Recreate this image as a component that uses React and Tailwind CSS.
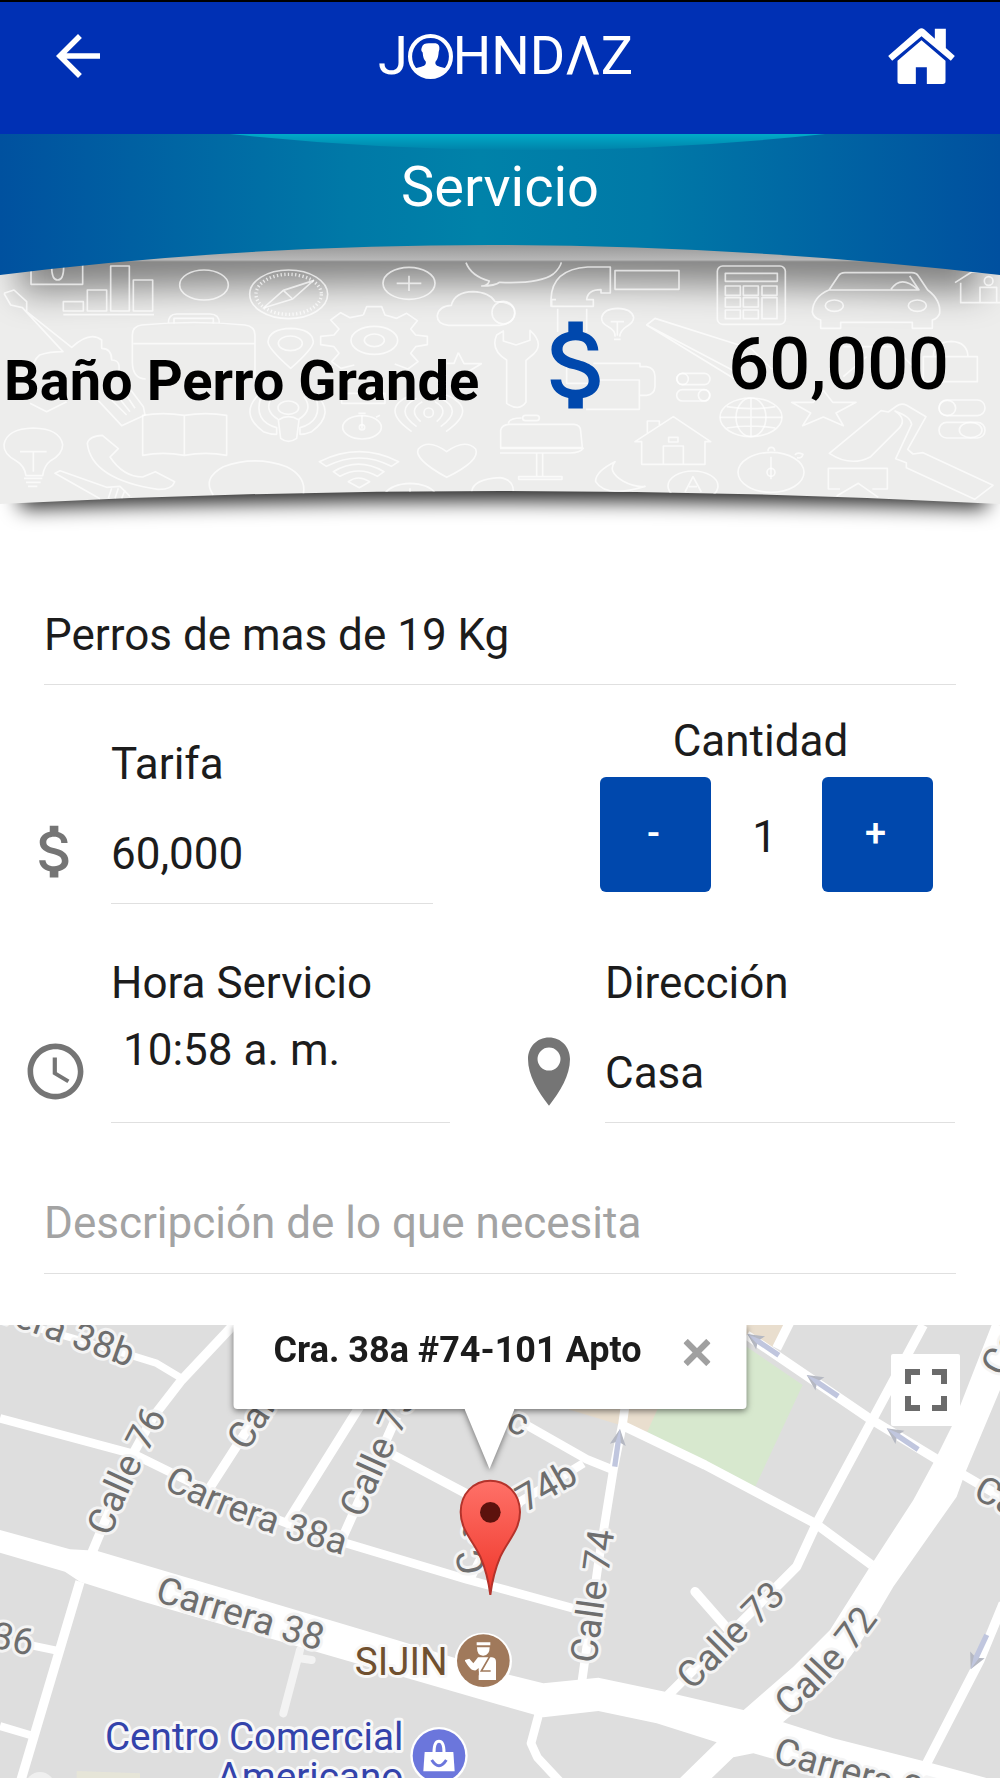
import { useId, useState } from "react";
import { MdAccessTime, MdArrowBack, MdAttachMoney, MdFullscreen } from "react-icons/md";

function PersonMark() {
  return (
    <svg viewBox="0 0 132 132" className="h-[45px] w-[45px]" aria-hidden="true">
      <circle cx="66" cy="66" r="60" fill="none" stroke="#fff" strokeWidth="12" />
      <path
        fill="#fff"
        d="M41 38c2-8 10-11 20-11h20c9 2 12 8 11 18l-2 8c-1 15-4 22-9 28-3 8 3 13 12 15l20 5c-12 16-28 25-47 25S31 117 19 101l20-5c10-2 15-7 13-15-5-6-8-13-9-27-5-4-5-9-2-16z"
      />
    </svg>
  );
}

function HomeIcon() {
  return (
    <svg viewBox="0 0 200 168" className="h-14 w-[67px]" fill="#fff" aria-hidden="true">
      <path d="M92 4Q100 -3 108 4L140 32V2H173V60L200 84 188 98 100 25 12 98 0 84Z" />
      <path d="M100 37L172 98V160Q172 168 164 168H116V118H83V168H36Q28 168 28 160V98Z" />
    </svg>
  );
}

function TopBar() {
  return (
    <header className="flex items-center justify-between border-t-2 border-black bg-[#0030b4] px-[45px] pb-6 text-white">
      <button type="button" aria-label="Volver" className="flex h-[108px] w-[66px] items-center justify-center">
        <MdArrowBack size={66} />
      </button>
      <h1 className="flex items-center pl-3 text-[54px] leading-[60px] font-normal" aria-label="Johndaz">
        <span>J</span>
        <PersonMark />
        <span>HNDΛZ</span>
      </h1>
      <a href="#inicio" aria-label="Inicio" className="flex h-[108px] items-center">
        <HomeIcon />
      </a>
    </header>
  );
}

function ToolDoodles() {
  return (
    <g fill="none" stroke="#fff" strokeOpacity="0.7" strokeWidth="5" strokeLinejoin="round">
      <path d="M93 105V163H248V105M155 110q0 40 18 40t18-40" />
      <path d="M190 215h60v28h-60zM262 180h58v63h-58zM332 108h56v135h-56zM400 150h58v93h-58zM190 254h272" />
      <path d="M12 190l30-10 38 35v30l135 107q55-50 90-22v25q30 0 30 35 30 0 20 40l75 100 5 25-70 32-70-75M12 190l20 35 35 8 122 132q-40 0-70 10-25 20-15 50M90 520l50 25 60-30M330 505l50 50M350 495l40 50M375 490l30 45" />
      <ellipse cx="612" cy="165" rx="73" ry="45" />
      <ellipse cx="866" cy="193" rx="117" ry="73" />
      <ellipse cx="866" cy="193" rx="98" ry="60" strokeDasharray="4 7" strokeWidth="10" />
      <path d="M940 152l-62 55-88 27 60-53zM850 181l28 26" />
      <path d="M425 285q-28 4-28 30v80q0 50 40 52M765 440V315q0-26-30-30-150-15-310 0M400 341h363M505 280q0-28 25-28h100q28 0 28 28M522 282v-17h118v17" />
      <path d="M872 415q-68-60-68-80 4-38 68-40 64 2 68 40 0 20-68 80z" />
      <ellipse cx="871" cy="340" rx="36" ry="22" />
      <path d="M1090 255l10-25h45l10 25 35 10 30-15 32 22-20 25 15 18 35 4v25l-35 6-15 20 22 25-30 22-40-15M1090 255l-40 8-28-15-30 22 25 27-15 18-40 4v25l40 6 15 20-22 25 28 20 40-10" />
      <ellipse cx="1123" cy="331" rx="70" ry="42" />
      <ellipse cx="1123" cy="331" rx="30" ry="19" />
      <ellipse cx="1227" cy="160" rx="78" ry="48" />
      <path d="M1190 160h74M1227 137v46" />
      <path d="M1398 98q15 40 70 55-5 15-23 15 40 0 55-12M1500 157q120 5 160-25 20-18 24-35" />
      <path d="M1500 286h-155q-35-4-33-30 5-28 42-30 10-40 65-41 50 2 66 30 60 0 60 35-3 30-45 36" />
      <path d="M1375 368l17 33h52l-40 24M1340 400h22l13-32M1025 490h130v30h-130z" />
      <path d="M780 490q-65 60 10 115 20 8 40 8v-20q-70-20-48-90M945 490q65 60-10 115-20 8-35 8v-20q70-20 48-90M818 500q-30 40 16 68M912 500q30 40-16 68" />
      <ellipse cx="865" cy="533" rx="31" ry="20" />
      <path d="M835 570q30-20 62 0l-7 55q-25 18-48 0z" />
      <ellipse cx="1086" cy="592" rx="58" ry="35" />
      <path d="M1086 556v40M1075 550h22M1128 562l12-6" />
      <circle cx="1086" cy="592" r="8" />
      <path d="M1235 605q-100-70 0-110M1338 605q100-70 0-110M1250 590q-70-50 0-85M1322 590q70-50 0-85M1262 575q-40-35 5-60M1310 575q40-35-5-60" />
      <circle cx="1286" cy="548" r="14" />
      <path d="M428 556q60-10 125 0 65-10 127 0v120q-62-12-127 0-65-12-125 0zM553 556v120" />
      <path d="M78 737q-4-30-30-45-38-20-36-48 8-48 88-50 80 2 88 50 0 28-36 48-20 15-24 45zM60 665h80M100 665v60M72 745h55M78 757h44M84 769h28" />
      <path d="M262 640q5-22 45-24l48 40-25 25q40 60 98 60l38-16 58 30q-8 24-50 23-200-30-212-138z" />
      <path d="M300 806L165 730l15-8 140 50 40-3 30 30M335 775l-10 30M355 775l-10 30M375 780l-10 25" />
      <path d="M640 795q-35-50 30-85 95-35 190 0 60 30 50 82" />
      <path d="M958 695q120-60 238 0l-22 14q-95-50-195 0zM1000 725q75-45 152 0l-20 14q-55-32-112 0zM1045 755q30-22 64 0l-31 18z" />
      <path d="M1340 742q-100-55-85-85 30-32 85 8 55-40 87-8 15 35-87 85z" />
      <path d="M1155 790q20-28 75-30 55 2 75 28M1230 775v15M1415 785q5-38 85-42 40 6 40 40" />
      <path d="M1653 230v-22q2-90 110-97h40v0h28v78h-28v-10q-40 0-43 30h20v20h-125v-20h13M1673 236v70M1760 236v70M1845 122h192v56h-192z" />
      <path d="M1845 320q2-18-20-30-22-10-20-28 6-26 48-27 42 1 48 27 0 16-22 28-18 12-20 30M1832 275h40M1852 275v42M1842 328h20" />
      <ellipse cx="1510" cy="248" rx="34" ry="34" />
      <path d="M1520 520V390q-50-30-30-75l20-12v30l38 12 42-14v-30q50 45 0 80l-12 10v125q-20 30-58 4z" />
      <path d="M2225 460L1940 285l25-20 290 92 60 60M1940 285l285 150" />
      <rect x="2152" y="108" width="204" height="175" rx="16" />
      <path d="M2176 130h156v24h-156zM2176 168h45v28h-45zM2230 168h45v28h-45zM2286 168h45v28h-45zM2176 203h45v28h-45zM2230 203h45v28h-45zM2176 240h45v26h-45zM2230 240h45v26h-45zM2286 203h45v63h-45z" />
      <path d="M2487 180l28-42q6-10 20-10h200q14 0 20 10l28 42q40 30 36 70-6 16-22 20v25h-60v-18h-215v18h-60v-25q-22-6-25-24 2-46 50-66zM2487 180h270l-28-42M2673 178q30-45 80 0" />
      <ellipse cx="2503" cy="227" rx="27" ry="17" />
      <ellipse cx="2752" cy="227" rx="27" ry="17" />
      <path d="M2865 158l50-32h85M2882 158v60h118M2940 218v-46h50v46" />
      <circle cx="2966" cy="153" r="13" />
      <path d="M2770 380h162v75h-162zM2800 380q0-44 54-46 48 2 50 46M2530 350h150l80 80M2530 440l70-60" />
      <path d="M1780 400h140v10h20q25 4 25 30v30q-2 24-25 26h-20M1800 450h118v88h-160M1700 400v60h100" />
      <rect x="2030" y="430" width="100" height="34" rx="17" />
      <circle cx="2048" cy="447" r="17" />
      <rect x="2030" y="479" width="100" height="34" rx="17" />
      <circle cx="2112" cy="496" r="17" />
      <ellipse cx="2253" cy="562" rx="93" ry="58" />
      <ellipse cx="2253" cy="562" rx="45" ry="58" />
      <path d="M2253 504v116M2160 562h186M2180 530q73 12 146 0M2180 594q73-12 146 0" />
      <path d="M2375 517h65l30-36 28 36h70l-60 32 22 38-60-26-62 26 24-38z" />
      <path d="M1502 600q4-16 25-17h195q20 2 20 20l5 50h-245zM1500 655h250q-10 14-40 14h-210M1610 670v70M1628 670v70M1556 740h130v8h-130zM1525 580q2-16 40-16" />
      <rect x="1568" y="556" width="50" height="16" rx="8" />
      <path d="M1905 635l115-75 112 75h-17v68h-190v-68zM1990 703v-55h60v55M1942 608v-35h36v12M2006 622h28v14h-28z" />
      <path d="M1845 695q-60 30-58 60 30 50 148 14-30 4-65-15-50-30-25-59z" />
      <ellipse cx="2079" cy="768" rx="75" ry="45" />
      <path d="M2055 786l24-46 25 46M2067 770h24" />
      <ellipse cx="2313" cy="727" rx="99" ry="60" />
      <path d="M2313 680v68M2304 664q0-12 10-12t10 12M2385 675q6-10 24-2-4 14-18 10" />
      <circle cx="2313" cy="727" r="12" />
      <path d="M2488 670L2643 542l22 4 25-18q14-10 30-2l58 34-55 98 16 14 30-4 210 98-55 42-205-95v-15l-32-12 48-103q-4-24-50-40 40 26 8 56L2612 680q-60 32-124-10z" />
      <rect x="2817" y="510" width="138" height="47" rx="23" />
      <ellipse cx="2842" cy="534" rx="25" ry="23" />
      <rect x="2817" y="577" width="138" height="47" rx="23" />
      <ellipse cx="2912" cy="600" rx="34" ry="23" />
      <path d="M2520 777h-35v-62h177v62h-45M2510 798l65-38 60 42" />
    </g>
  );
}

function HeroBackdrop() {
  const id = useId();
  return (
    <svg
      viewBox="0 -288 3000 1248"
      preserveAspectRatio="none"
      className="absolute inset-0 h-full w-full"
      aria-hidden="true"
    >
      <defs>
        <linearGradient id={`${id}band`}>
          <stop offset="0" stopColor="#00519f" />
          <stop offset="0.35" stopColor="#0079a7" />
          <stop offset="0.48" stopColor="#0082a9" />
          <stop offset="0.65" stopColor="#0079a7" />
          <stop offset="1" stopColor="#00509f" />
        </linearGradient>
        <linearGradient id={`${id}glow`} x1="0" y1="0" x2="0" y2="1">
          <stop offset="0" stopColor="#00abc8" />
          <stop offset="1" stopColor="#0083aa" />
        </linearGradient>
        <linearGradient id={`${id}strip`} x1="0" y1="0" x2="0" y2="1">
          <stop offset="0.5" stopColor="#999" />
          <stop offset="1" stopColor="#bababa" />
        </linearGradient>
        <filter id={`${id}soft`} x="-10%" y="-50%" width="120%" height="200%">
          <feGaussianBlur stdDeviation="30" />
        </filter>
        <filter id={`${id}wide`} x="-10%" y="-50%" width="120%" height="200%">
          <feGaussianBlur stdDeviation="52" />
        </filter>
        <clipPath id={`${id}sheet`}>
          <path d="M0 0H3000V822Q1500 744 0 822Z" />
        </clipPath>
      </defs>
      <path d="M60 600H2960V835Q1500 790 60 835Z" fill="#000" fillOpacity="0.85" filter={`url(#${id}soft)`} />
      <g clipPath={`url(#${id}sheet)`}>
        <rect width="3000" height="860" fill="#ededec" />
        <path d="M60 -300H2940V185Q1480 125 60 185Z" fill="#000" fillOpacity="0.46" filter={`url(#${id}wide)`} />
        <ToolDoodles />
        <rect y="0" width="3000" height="93" fill={`url(#${id}strip)`} />
        <path d="M0 93H3000" stroke="#999" strokeWidth="3" />
      </g>
      <path d="M0 -288H3000V135Q1440 -45 0 135Z" fill={`url(#${id}band)`} />
      <path d="M690 -288Q1580 -192 2475 -288Z" fill={`url(#${id}glow)`} />
    </svg>
  );
}

function Hero() {
  return (
    <section className="relative h-[416px]">
      <HeroBackdrop />
      <div className="relative">
        <h2 className="pt-[21px] text-center text-[56px] leading-[64px] text-white">Servicio</h2>
        <div className="grid grid-cols-2 items-center pt-[88px] text-black">
          <p className="pt-8 pl-1 text-[56px] leading-[64px] font-bold whitespace-nowrap">Baño Perro Grande</p>
          <div className="flex items-center justify-between pr-[51px] pl-5">
            <MdAttachMoney size={116} className="text-[#0048ad]" aria-hidden="true" />
            <p className="text-[72px] leading-[84px] font-medium">60,000</p>
          </div>
        </div>
      </div>
    </section>
  );
}

function PinIcon() {
  return (
    <svg viewBox="0 0 128 208" className="h-[69px] w-[42px]" fill="#757575" aria-hidden="true">
      <path fillRule="evenodd" d="M64 0C27 0 0 29 0 66c0 50 30 100 64 142 34-42 64-92 64-142C128 29 101 0 64 0zm0 31a35 35 0 1 1 0 70a35 35 0 1 1 0-70z" />
    </svg>
  );
}

function QuantityButton({ label, onClick, children }) {
  return (
    <button
      type="button"
      aria-label={label}
      onClick={onClick}
      className="h-[115px] w-[111px] rounded-md bg-[#0048ad] pr-1 pb-1 text-[38px] font-medium text-white"
    >
      {children}
    </button>
  );
}

function ServiceForm() {
  const [quantity, setQuantity] = useState(1);
  return (
    <form className="flex flex-col text-[44px] leading-[56px] text-[#1c1c1c]">
      <p className="mx-[44px] mt-[57px] border-b border-[#e0e0e0] pb-[21px]">Perros de mas de 19 Kg</p>

      <div className="grid grid-cols-2">
        <div className="flex pt-[51px]">
          <div className="flex w-[111px] shrink-0 justify-center pt-[81px]">
            <MdAttachMoney size={69} color="#757575" aria-hidden="true" />
          </div>
          <div className="mr-[67px] flex min-w-0 flex-1 flex-col">
            <label htmlFor="tarifa">Tarifa</label>
            <input
              id="tarifa"
              readOnly
              value="60,000"
              className="mt-[33px] h-[79px] w-full border-b border-[#e0e0e0] pb-5 outline-none"
            />
          </div>
        </div>
        <div className="pt-[28px] pr-[67px] pl-[100px]">
          <p className="pr-3 text-center">Cantidad</p>
          <div className="mt-2 flex items-center justify-between">
            <QuantityButton label="Restar" onClick={() => setQuantity(Math.max(1, quantity - 1))}>
              -
            </QuantityButton>
            <output className="pt-1 pr-1">{quantity}</output>
            <QuantityButton label="Sumar" onClick={() => setQuantity(quantity + 1)}>
              +
            </QuantityButton>
          </div>
        </div>
      </div>

      <div className="mt-[51px] grid grid-cols-2">
        <div className="flex">
          <div className="flex w-[111px] shrink-0 justify-center pt-[83px]">
            <MdAccessTime size={67} color="#757575" aria-hidden="true" />
          </div>
          <div className="mr-[50px] flex min-w-0 flex-1 flex-col">
            <label htmlFor="hora">Hora Servicio</label>
            <input
              id="hora"
              defaultValue="10:58 a. m."
              className="mt-[11px] h-[101px] w-full border-b border-[#e0e0e0] pb-11 pl-3 outline-none"
            />
          </div>
        </div>
        <div className="flex pr-[45px]">
          <div className="flex w-[105px] shrink-0 justify-center pt-[82px] pr-2">
            <PinIcon />
          </div>
          <div className="flex min-w-0 flex-1 flex-col">
            <label htmlFor="direccion">Dirección</label>
            <input
              id="direccion"
              defaultValue="Casa"
              className="mt-[33px] h-[79px] w-full border-b border-[#e0e0e0] pb-5 outline-none"
            />
          </div>
        </div>
      </div>

      <div className="mx-[44px] mt-[71px] mb-[51px]">
        <input
          aria-label="Descripción de lo que necesita"
          placeholder="Descripción de lo que necesita"
          className="h-20 w-full border-b border-[#e0e0e0] pb-[21px] outline-none placeholder:text-[#a3a3a3]"
        />
      </div>
    </form>
  );
}

const roads = [
  { d: "M-20 15L390 135 470 160 545 205", w: 22 },
  { d: "M700 45L545 210 460 320 400 430 275 730M240 815L60 1420", w: 28 },
  { d: "M0 325L400 432 640 550 860 640 1040 700 1400 808 1720 895", w: 26 },
  { d: "M625 540L960 20M860 640L1085 280M1020 700L1190 320M1180 435L1420 562", w: 28 },
  { d: "M1410 808L1450 730 1560 575 1660 515 1750 460", w: 26 },
  { d: "M1570 340L1760 448 1840 480", w: 26 },
  { d: "M1875 290L1868 340 1840 480 1795 760 1745 1120", w: 26 },
  { d: "M1865 345L2115 465 2445 640 2615 765", w: 28 },
  { d: "M2240 75L2600 320 2830 460 3010 565", w: 28 },
  { d: "M2770 45L2450 640 2390 770 2200 960 2000 1160", w: 28 },
  { d: "M2370 35L2330 115", w: 28 },
  { d: "M3010 880L2940 1050 2775 1370", w: 28 },
  { d: "M1617 1210L1593 1300 1612 1342 1680 1415", w: 26 },
  { d: "M0 1248L90 1275M80 1003L170 1022", w: 24 },
];

const streets = [
  { name: "Carrera 38b", d: "M-262 -60L388 172", end: true },
  { name: "Calle 76", d: "M332 682Q386 522 517 292" },
  { name: "Calle 75", d: "M740 427L992 42" },
  { name: "Calle 75", d: "M1086 628L1284 189" },
  { name: "Carrera 38a", d: "M488 532Q676 640 1076 748" },
  { name: "Carrera 38", d: "M462 872L1080 1060" },
  { name: "Carrera 36", d: "M-560 890L92 1038", end: true },
  { name: "Calle 74b", d: "M1456 786L1440 690L1500 605L1590 600L1800 480" },
  { name: "Calle 74", d: "M1788 1062L1850 612" },
  { name: "Calle 73", d: "M2076 1144L2406 817" },
  { name: "Calle 72", d: "M2366 1222Q2528 1090 2678 865" },
  { name: "Calle 72", d: "M3006 204L3218 -176" },
  { name: "Carrera 37", d: "M2915 562L3500 860" },
  { name: "Carrera 37", d: "M2316 1356L3000 1550" },
  { name: "c", d: "M1514 360L1596 390" },
];

const oneWay = [
  { x: 2242, y: 72, angle: 34 },
  { x: 2420, y: 195, angle: 34 },
  { x: 2660, y: 355, angle: 34 },
  { x: 1860, y: 357, angle: 98 },
  { x: 2912, y: 1078, angle: -65 },
];

function StreetMap() {
  const id = useId();
  return (
    <svg
      viewBox="0 45 3000 1359"
      preserveAspectRatio="xMidYMin slice"
      className="absolute inset-0 h-full w-full"
      role="img"
      aria-label="Mapa"
    >
      <defs>
        <linearGradient id={`${id}pin`} x1="0" y1="0" x2="0" y2="1">
          <stop offset="0" stopColor="#ff7168" />
          <stop offset="1" stopColor="#ee3529" />
        </linearGradient>
      </defs>
      <rect y="45" width="3000" height="1400" fill="#dedede" />
      <path d="M2060 45L2240 110 2408 225 2265 532 1940 365Z" fill="#d7e8ce" />
      <path d="M1680 290L1870 348 1942 365 1985 270ZM2230 45H2350L2310 125 2230 70Z" fill="#e9dece" />
      <path d="M900 1020L850 1210M900 1045L935 1050" stroke="#f3f3f3" strokeWidth="24" strokeLinecap="round" fill="none" />
      <circle cx="120" cy="1430" r="44" fill="#efefef" />
      <path d="M230 1383L420 1390V1410H230Z" fill="#e6e5d8" />
      <g fill="none" stroke="#fff" strokeLinejoin="round">
        {roads.map((road) => (
          <path key={road.d} d={road.d} strokeWidth={road.w} />
        ))}
        <path d="M2085 845L2190 965" strokeWidth="28" strokeLinecap="round" />
      </g>
      <g fill="#fff">
        <path d="M0 660L210 718 290 722 1190 990 1530 1095 1630 1120 1795 1103 1995 1145 2230 1200 2350 1237 2500 1285 2790 1358 3000 1415 2500 1420 2340 1352 2260 1330 2200 1342 2125 1414 2030 1414 2150 1297 1970 1240 1795 1203 1630 1222 1500 1185 430 875 240 815 195 785 0 728Z" />
        <path d="M2225 1205L2380 1070 2490 960 2610 770 2740 570 2810 440 2860 340 2975 45H3080L3000 240 2895 490 2870 560 2680 830 2580 1000 2500 1110 2345 1240Z" />
      </g>
      {oneWay.map((arrow) => (
        <g key={`${arrow.x}-${arrow.y}`} transform={`translate(${arrow.x} ${arrow.y}) rotate(${arrow.angle})`}>
          <path d="M0 0L48 -24 38 0 48 24Z" fill="#b5b8c2" />
          <path d="M0 0L40 -8H114V8H40Z" fill="#c0c6de" />
        </g>
      ))}
      <g
        fontSize="112"
        fill="#6e6e6e"
        stroke="#f4f4f4"
        strokeWidth="18"
        strokeLinejoin="round"
        style={{ paintOrder: "stroke" }}
      >
        {streets.map((street, i) => (
          <text key={street.d}>
            <path id={`${id}s${i}`} d={street.d} />
            <textPath
              href={`#${id}s${i}`}
              startOffset={street.end ? "100%" : "0%"}
              textAnchor={street.end ? "end" : "start"}
            >
              {street.name}
            </textPath>
          </text>
        ))}
      </g>
      <g fontSize="116" textAnchor="end" stroke="#f8f8f8" strokeWidth="18" strokeLinejoin="round" style={{ paintOrder: "stroke" }}>
        <text x="1343" y="1094" fill="#70502f">SIJIN</text>
        <text x="1210" y="1320" fill="#3443ab">Centro Comercial</text>
        <text x="1210" y="1441" fill="#3443ab">Americano</text>
      </g>
      <circle cx="1450" cy="1054" r="86" fill="#fff" />
      <circle cx="1450" cy="1052" r="79" fill="#a0795b" />
      <g transform="translate(1320 450)">
        <path d="M110 547H151V556H110ZM111 562H149Q149 586 130 587T111 562Z" fill="#fff" />
        <path d="M75 600L88 596 100 610 114 592H156Q168 593 168 606V660H116V634L98 630Q90 628 75 603Z" fill="#fff" />
        <path d="M151 586L124 633H152" fill="none" stroke="#a0795b" strokeWidth="5" />
        <path d="M116 624V646H104V634Z" fill="#a0795b" />
      </g>
      <circle cx="1317" cy="1337" r="86" fill="#fff" />
      <circle cx="1317" cy="1337" r="79" fill="#6b76dc" />
      <path d="M1274 1326h86l4 58h-94z" fill="#fff" />
      <path d="M1302 1328q0-34 15-34t15 34" fill="none" stroke="#fff" strokeWidth="9" />
      <path d="M1295 1350q22 34 44 0" fill="none" stroke="#6b76dc" strokeWidth="9" />
      <path
        d="M1471 512C1420 512 1382 552 1382 606C1382 660 1418 690 1441 740C1458 780 1466 815 1471 855C1476 815 1484 780 1501 740C1524 690 1560 660 1560 606C1560 552 1522 512 1471 512Z"
        fill={`url(#${id}pin)`}
        stroke="#b4332b"
        strokeWidth="6"
      />
      <circle cx="1471" cy="607" r="31" fill="#5c120d" />
    </svg>
  );
}

function MapPanel() {
  return (
    <section className="relative min-h-[453px] flex-1 overflow-hidden">
      <StreetMap />
      <div className="absolute top-0 left-[49%] -translate-x-1/2 drop-shadow-[0_2px_3px_rgba(0,0,0,0.5)]">
        <div className="flex h-[84px] items-start rounded-b bg-white pr-9 pl-10">
          <p className="pt-[3px] text-[36px] leading-[44px] font-bold whitespace-nowrap text-[#1c1c1c]">
            Cra. 38a #74-101 Apto
          </p>
          <button type="button" aria-label="Cerrar" className="ml-[42px] pt-[14px]">
            <svg viewBox="0 0 26 26" className="h-[27px] w-[27px]" aria-hidden="true">
              <path d="M2 2L24 24M24 2L2 24" stroke="#a0a0a0" strokeWidth="6" />
            </svg>
          </button>
        </div>
        <svg viewBox="0 0 50 60" className="mx-auto block h-[60px] w-[50px]" fill="#fff" aria-hidden="true">
          <path d="M0 0H50L25 60Z" />
        </svg>
      </div>
      <button
        type="button"
        aria-label="Pantalla completa"
        className="absolute top-[29px] right-10 flex h-[72px] w-[69px] items-center justify-center rounded-xs bg-white text-[#6b6b6b]"
      >
        <MdFullscreen size={72} className="shrink-0" />
      </button>
    </section>
  );
}

export default function App() {
  return (
    <main className="flex min-h-screen flex-col overflow-x-hidden bg-white font-[Roboto,sans-serif]">
      <TopBar />
      <Hero />
      <ServiceForm />
      <MapPanel />
    </main>
  );
}
